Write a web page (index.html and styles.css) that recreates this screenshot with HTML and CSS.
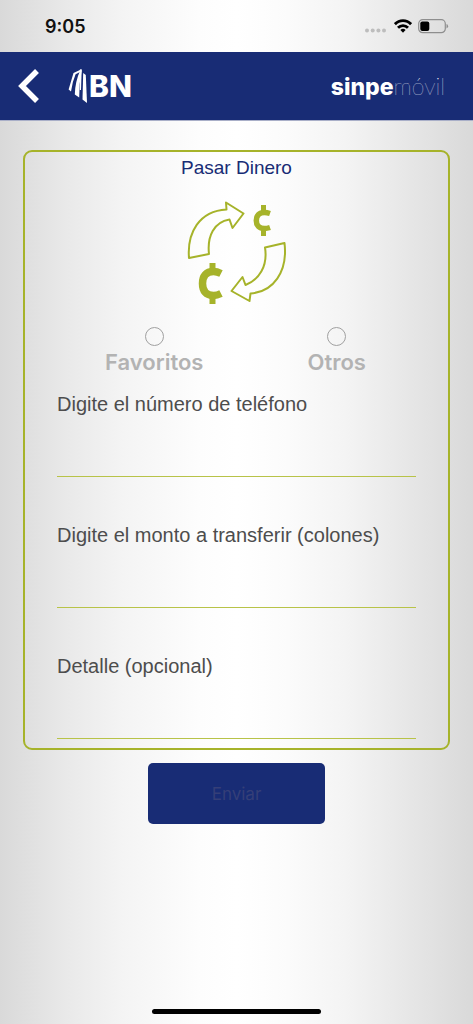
FILE: index.html
```html
<!DOCTYPE html>
<html lang="es">
<head>
<meta charset="utf-8">
<meta name="viewport" content="width=device-width, initial-scale=1">
<title>Pasar Dinero</title>
<link rel="stylesheet" href="styles.css">
</head>
<body>
<div class="screen">
  <div class="status">
    <span class="time">9:05</span>
    <div class="indicators">
      <svg width="24" height="16" viewBox="0 0 24 16" fill="#bdbdbd" aria-hidden="true">
        <circle cx="3" cy="12.500" r="2"/><circle cx="8.700" cy="12.500" r="2"/><circle cx="14.400" cy="12.500" r="2"/><circle cx="20" cy="12.500" r="2"/>
      </svg>
      <svg width="18" height="16" viewBox="0 0 18 16" fill="none" stroke="#000" stroke-width="2.800" aria-hidden="true">
        <path d="M.9 6.200C5.400 1.300 12.600 1.300 17.100 6.200"/>
        <path d="M4 9.700C6.800 6.800 11.200 6.800 14 9.700"/>
        <path d="M6.400 12Q9 9.700 11.600 12L9 14.800Z" fill="#000" stroke="none"/>
      </svg>
      <svg width="31" height="16" viewBox="0 0 31 16" aria-hidden="true">
        <rect x=".7" y="1.700" width="26.600" height="13" rx="4" fill="none" stroke="#8e8e8e" stroke-width="1.200"/>
        <rect x="2.300" y="3.400" width="9" height="9.700" rx="2" fill="#000"/>
        <path d="M28.500 6v4.400q1.600-.6 1.600-2.200t-1.600-2.200z" fill="#8e8e8e"/>
      </svg>
    </div>
  </div>
  <header class="topbar">
    <button class="back" type="button" aria-label="Volver">
      <svg width="22" height="36" viewBox="0 0 22 36" fill="none" stroke="#fff" stroke-width="5.500"><path d="M19 3L4 18L19 33"/></svg>
    </button>
    <div class="logo">
      <svg width="21" height="36" viewBox="0 0 21 36" fill="#fff" aria-hidden="true">
        <path d="M.6 21.500L5.500 5L13.500 1.200V3.200L7.600 6.200Q4.200 14 3 23.500Z"/>
        <path d="M12.500 1.500Q7 14 6.800 26.500L11.200 29.500Q10.900 16 13.600 3Z"/>
        <path d="M11.900 1.500H13.700L13 22H11.800Z"/>
        <path d="M15.200 5L14.500 31.500L19 35L17.800 7Z"/>
      </svg>
      <span class="logo-text">BN</span>
    </div>
    <div class="brand"><span class="brand-bold">sinpe</span><span class="brand-thin">móvil</span></div>
  </header>
  <main class="content">
    <form class="form">
      <div class="card">
        <h1 class="title">Pasar Dinero</h1>
        <svg class="transfer" width="104" height="108" viewBox="0 0 104 108" fill="none" stroke="#a6b32a" stroke-width="2" stroke-linejoin="round" aria-hidden="true">
          <path d="M4 60C2 35 14 13 41.500 11.500L41 4.500L58.500 15.500L47.500 30L44.500 21.500C29 24 22 38 24 56Z"/>
          <path d="M80 49.500L99.500 45C103 74 88 94 65.500 95.500L64.500 103L46.500 93L57.500 79L60.500 87C74 82 83 68 80 49.500Z"/>
          <g stroke-width="5.500"><path d="M85 15.500Q82 14.500 79.500 14.500C74 14.500 71.300 17.500 71.300 22.500S74 30.500 79.500 30.500Q82 30.500 85 29.500"/><path d="M78.500 7V14M78.500 31V38" stroke-width="5"/></g>
          <g stroke-width="7.500"><path d="M36 75.500Q32 73.500 28.500 73.500C21 73.500 17.500 78 17.500 85.500S21 97.500 28.500 97.500Q32 97.500 36 95.500"/><path d="M27.500 65V74M27.500 97V106" stroke-width="6"/></g>
        </svg>
        <div class="choices">
          <label class="choice"><input class="radio" type="radio" name="destino"><span>Favoritos</span></label>
          <label class="choice"><input class="radio" type="radio" name="destino"><span>Otros</span></label>
        </div>
        <div class="fields">
          <div class="field"><label for="telefono">Digite el número de teléfono</label><input id="telefono" type="tel"></div>
          <div class="field"><label for="monto">Digite el monto a transferir (colones)</label><input id="monto" type="text" inputmode="decimal"></div>
          <div class="field"><label for="detalle">Detalle (opcional)</label><input id="detalle" type="text"></div>
        </div>
      </div>
      <button class="submit" type="submit" disabled>Enviar</button>
    </form>
  </main>
  <div class="home"></div>
</div>
</body>
</html>
```
FILE: styles.css
```css
* { box-sizing: border-box; }
body { margin: 0; font-family: Inter, "Liberation Sans", sans-serif; }
.screen {
  min-height: 100vh;
  display: flex;
  flex-direction: column;
  background: linear-gradient(90deg, #d9d9d9 0%, #e9e9e9 14%, #f4f4f4 26%, #fdfdfd 42%, #fff 50%, #fbfbfb 61%, #f4f4f4 73%, #e7e7e7 86%, #d9d9d9 100%);
}
.status {
  height: 52px;
  display: flex;
  align-items: center;
  justify-content: space-between;
  padding: 0 24px 0 45px;
}
.time { font-size: 18px; font-weight: 600; color: #111; }
.indicators { display: flex; gap: 6px; }
.topbar {
  height: 69px;
  display: flex;
  align-items: center;
  padding: 0 28px 0 18px;
  background: #182c75;
  border-bottom: 1px solid #a9afc8;
  color: #fff;
}
.back { display: flex; padding: 0; border: 0; background: none; }
.logo { display: flex; align-items: center; margin-left: 28px; }
.logo-text { font-size: 30px; font-weight: 800; line-height: 36px; }
.brand { margin-left: auto; display: flex; align-items: baseline; line-height: 28px; }
.brand-bold { font-size: 23px; font-weight: 800; }
.brand-thin { font-family: Lato, sans-serif; font-size: 23px; font-weight: 100; }
.content { flex: 1; padding: 29px 23px 0; }
.form { display: flex; flex-direction: column; align-items: center; gap: 13px; }
.card {
  width: 100%;
  display: flex;
  flex-direction: column;
  align-items: center;
  border: 2px solid #a6b32a;
  border-radius: 9px;
  padding-bottom: 9px;
}
.title {
  margin: 0;
  font-family: "Liberation Sans", Arial, sans-serif;
  font-size: 19px;
  line-height: 32px;
  font-weight: 400;
  color: #182c75;
}
.transfer { margin-top: 14px; }
.choices {
  align-self: stretch;
  display: grid;
  grid-template-columns: 1fr 1fr;
  margin: 21px 20px 0 38px;
}
.choice {
  display: flex;
  flex-direction: column;
  align-items: center;
  gap: 4px;
  font-size: 22px;
  line-height: 24px;
  font-weight: 600;
  color: #b3b3b3;
}
.radio {
  appearance: none;
  width: 19px;
  height: 19px;
  margin: 0;
  border: 1px solid #a0a0a0;
  border-radius: 50%;
}
.radio:checked { background: #a6b32a; }
.fields {
  align-self: stretch;
  display: flex;
  flex-direction: column;
  gap: 46px;
  margin: 18px 32px 0;
}
.field { display: flex; flex-direction: column; }
.field label {
  font-family: "Liberation Sans", Arial, sans-serif;
  font-size: 20px;
  line-height: 24px;
  color: #4d4d4d;
}
.field input {
  width: 100%;
  height: 61px;
  padding: 12px 0 0;
  border: 0;
  border-bottom: 1px solid #b8c348;
  border-radius: 0;
  background: none;
  font: inherit;
  font-size: 19px;
  outline: none;
}
.submit {
  width: 177px;
  height: 61px;
  border: 0;
  border-radius: 5px;
  background: #182c75;
  color: #353f78;
  font-family: inherit;
  font-size: 17px;
}
.home {
  width: 169px;
  height: 5px;
  margin: 0 auto 10px;
  border-radius: 3px;
  background: #000;
}
```
